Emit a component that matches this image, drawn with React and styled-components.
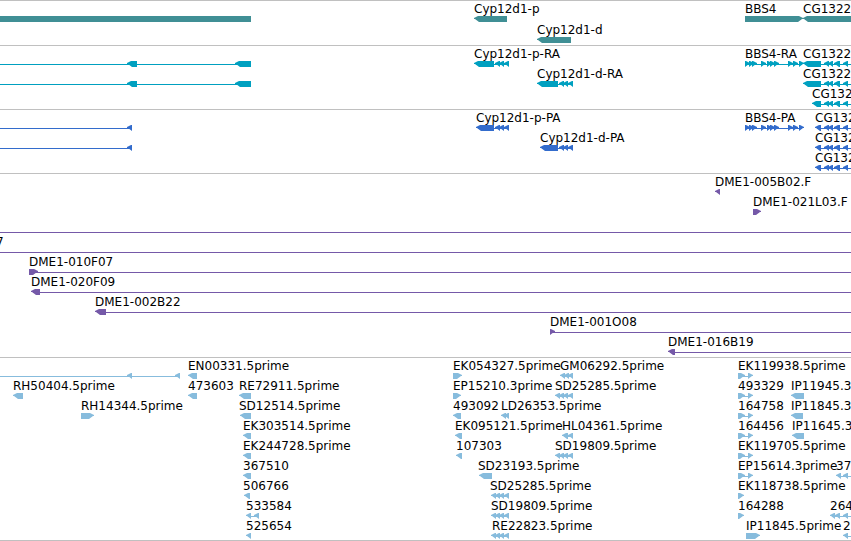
import React from 'react'
import styled, {createGlobalStyle} from 'styled-components'

// a feature: name, x of its label, strand ('-' or '+'), blocks, open ends
const f = (name, x, strand, blocks, open = '') => ({name, x, strand, blocks, open});

const bbs4 = [[745, 750], [749, 754], [752, 757], [761, 766], [767, 772], [770, 775], [774, 779], [788, 793], [793, 798], [799, 804]];
const cgTail = [[824, 829], [828, 833], [834, 840], [843, 848]];
const cypP = [[495, 500], [499, 504], [504, 509]];
const cypD = [[559, 564], [563, 568], [568, 573]];
const four491 = [[491, 496], [495, 500], [499, 504], [504, 509]];
const four555 = [[555, 560], [559, 564], [563, 568], [568, 573]];
const pair738 = [[738, 745], [748, 753]];

const tracks = [
  {
    id: 'gene',
    color: '#408f95',
    gap: 1,
    rows: [
      [
        f('', 0, '', [[0, 251]]),
        f('Cyp12d1-p', 474, '-', [[474, 507]]),
        f('BBS4', 745, '+', [[745, 803]]),
        f('CG1322', 803, '-', [[803, 4000]])
      ],
      [f('Cyp12d1-d', 537, '-', [[537, 571]])]
    ]
  },
  {
    id: 'transcript',
    color: '#00a0c0',
    rows: [
      [
        f('', 0, '-', [[127, 137], [235, 251]], 'left'),
        f('Cyp12d1-p-RA', 474, '-', [[474, 494], ...cypP]),
        f('BBS4-RA', 745, '+', bbs4),
        f('CG1322', 803, '-', [[803, 821], ...cgTail], 'right')
      ],
      [
        f('', 0, '-', [[127, 137], [235, 251]], 'left'),
        f('Cyp12d1-d-RA', 537, '-', [[537, 558], ...cypD]),
        f('CG1322', 803, '-', [[803, 821], ...cgTail], 'right')
      ],
      [f('CG132', 812, '-', [[812, 821], ...cgTail], 'right')]
    ]
  },
  {
    id: 'protein',
    color: '#336ccc',
    rows: [
      [
        f('', 0, '-', [[127, 132]], 'left'),
        f('Cyp12d1-p-PA', 476, '-', [[476, 494], ...cypP]),
        f('BBS4-PA', 745, '+', bbs4),
        f('CG132', 815, '-', [[815, 821], ...cgTail], 'right')
      ],
      [
        f('', 0, '-', [[127, 132]], 'left'),
        f('Cyp12d1-d-PA', 540, '-', [[540, 558], ...cypD]),
        f('CG132', 815, '-', [[815, 821], ...cgTail], 'right')
      ],
      [f('CG132', 815, '-', [[815, 821], ...cgTail], 'right')]
    ]
  },
  {
    id: 'clone',
    color: '#7559a8',
    rows: [
      [f('DME1-005B02.F', 715, '-', [[715, 720]])],
      [f('DME1-021L03.F', 753, '+', [[753, 761]])],
      [f('', 0, '', [], 'both')],
      [f('7', -4, '', [], 'both')],
      [f('DME1-010F07', 29, '+', [[29, 38]], 'right')],
      [f('DME1-020F09', 31, '-', [[31, 40]], 'right')],
      [f('DME1-002B22', 95, '-', [[95, 106]], 'right')],
      [f('DME1-001O08', 550, '+', [[550, 555]], 'right')],
      [f('DME1-016B19', 668, '-', [[668, 675]], 'right')]
    ]
  },
  {
    id: 'est',
    color: '#87bcdd',
    rows: [
      [
        f('', 0, '-', [[127, 132], [175, 180]], 'left'),
        f('EN00331.5prime', 188, '-', [[188, 197]]),
        f('EK054327.5prime', 453, '+', [[453, 462]]),
        f('GM06292.5prime', 560, '-', [[560, 565], [564, 569], [568, 573]]),
        f('EK119938.5prime', 738, '+', pair738)
      ],
      [
        f('RH50404.5prime', 13, '-', [[13, 23]]),
        f('473603', 188, '-', [[188, 197]]),
        f('RE72911.5prime', 239, '-', [[239, 251]]),
        f('EP15210.3prime', 453, '+', [[453, 461]]),
        f('SD25285.5prime', 555, '-', four555),
        f('493329', 738, '+', pair738),
        f('IP11945.3', 791, '-', [[791, 804]])
      ],
      [
        f('RH14344.5prime', 81, '+', [[81, 94]]),
        f('SD12514.5prime', 239, '-', [[240, 251]]),
        f('493092', 453, '-', [[453, 461]]),
        f('LD26353.5prime', 501, '-', [[501, 506], [504, 509]]),
        f('164758', 738, '+', pair738),
        f('IP11845.3', 791, '-', [[791, 803]])
      ],
      [
        f('EK303514.5prime', 243, '-', [[243, 251]]),
        f('EK095121.5prime', 455, '-', [[455, 462]]),
        f('HL04361.5prime', 562, '-', [[562, 568], [568, 573]]),
        f('164456', 738, '+', pair738),
        f('IP11645.3', 792, '-', [[792, 804]])
      ],
      [
        f('EK244728.5prime', 243, '-', [[243, 251]]),
        f('107303', 456, '-', [[456, 462]]),
        f('SD19809.5prime', 555, '-', four555),
        f('EK119705.5prime', 738, '+', pair738)
      ],
      [
        f('367510', 243, '-', [[243, 251]]),
        f('SD23193.5prime', 478, '-', [[479, 492]]),
        f('EP15614.3prime', 738, '+', pair738),
        f('37', 836, '-', [[836, 841], [843, 848]], 'right')
      ],
      [
        f('506766', 243, '-', [[244, 250]]),
        f('SD25285.5prime', 490, '-', four491),
        f('EK118738.5prime', 738, '+', [[738, 744]])
      ],
      [
        f('533584', 246, '-', [[246, 251], [254, 259]]),
        f('SD19809.5prime', 491, '-', four491),
        f('164288', 738, '+', [[738, 744]]),
        f('264', 830, '-', [[830, 835], [835, 840], [843, 848]], 'right')
      ],
      [
        f('525654', 246, '-', [[246, 251]]),
        f('RE22823.5prime', 492, '-', four491),
        f('IP11845.5prime', 746, '+', [[746, 760]]),
        f('2', 843, '-', [[843, 848]], 'right')
      ]
    ]
  }
];

const blockPath = ([s, e], strand) => {
  if (strand === '-') {
    return `M${s} 3V2L${s + 4} 0H${e}V6H${s + 5}L${s + 1} 3Z`
  }
  if (strand === '+') {
    return `M${e} 3V2L${e - 4} 0H${s}V6H${e - 5}L${e - 1} 3Z`
  }
  return `M${s} 0H${e}V6H${s}Z`
};

const Feature = ({blocks, strand, open}) => {
  const fromLeft = open === 'left' || open === 'both';
  const toRight = open === 'right' || open === 'both';
  const start = fromLeft ? 0 : blocks[0][0] + 2;
  const end = toRight ? 4000 : blocks[blocks.length - 1][1] - 2;
  return (
    <g>
      <rect x={start} y="3" width={end - start} height="1"/>
      {blocks.map(b => <path key={b[0]} d={blockPath(b, strand)}/>)}
    </g>
  )
};

const App = () => (
  <Wrap>
    <GlobalStyle/>
    {tracks.map(t => (
      <Track key={t.id} $gap={t.gap}>
        {t.rows.map((row, i) => (
          <Row key={i}>
            <Labels>
              {row.filter(t => t.name).map(t => (
                <Label key={t.name} style={{left: t.x}}>{t.name}</Label>
              ))}
            </Labels>
            <Glyphs $color={t.color}>
              {row.map((t, j) => <Feature key={j} {...t}/>)}
            </Glyphs>
          </Row>
        ))}
      </Track>
    ))}
  </Wrap>
);

export default App

const GlobalStyle = createGlobalStyle`
  body {
    margin: 0;
    background: #fff;
  }
`;
const Wrap = styled.main`
  overflow: hidden;
  color: #000;
  font: 12px/14px 'DejaVu Sans', sans-serif;
`;
const Track = styled.section`
  display: flex;
  flex-direction: column;
  gap: ${p => p.$gap || 0}px;
  padding: 1px 0 2px;
  border-top: 1px solid #c0c0c0;
  &:last-child {
    padding-bottom: 1px;
    border-bottom: 1px solid #c0c0c0;
  }
`;
const Row = styled.div`
  display: flex;
  flex-direction: column;
`;
const Labels = styled.div`
  position: relative;
  height: 14px;
`;
const Label = styled.span`
  position: absolute;
  white-space: nowrap;
`;
const Glyphs = styled.svg`
  display: block;
  width: 100%;
  height: 6px;
  fill: ${p => p.$color};
`;
